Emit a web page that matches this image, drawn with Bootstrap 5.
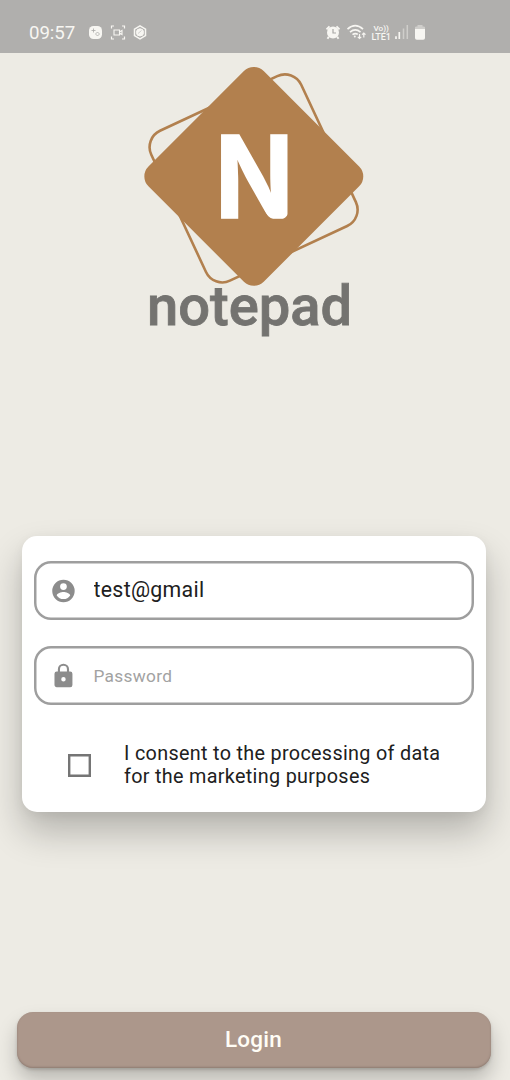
<!DOCTYPE html>
<html lang="en">
<head>
<meta charset="utf-8">
<meta name="viewport" content="width=device-width, initial-scale=1">
<title>Notepad</title>
<link rel="stylesheet" href="https://cdn.jsdelivr.net/npm/bootstrap@5.3.0/dist/css/bootstrap.min.css">
<style>
  body { background: #edebe4; font-family: Roboto, sans-serif; color: #202020; }
  .screen { height: 1080px; }
  .status-bar { height: 53px; background: #b0afad; color: #f7f6f2; padding: 11px 0 0 29px; }
  .clock { font-size: 18.7px; width: 59px; letter-spacing: -.1px; margin-top: 7.500px; line-height: 28px; }
  .status-left { width: 296px; }
  .logo { margin-top: 5px; }
  .login-card { margin: 191.400px 24px 0 22px; height: 275.600px; padding: 24.600px 12px 0; border-radius: 15px;
    box-shadow: 0 20px 36px 0 rgba(0,0,0,.24), 0 3px 12px rgba(0,0,0,.05); }
  .field { height: 59.500px; box-shadow: inset 0 0 0 2.500px #9e9e9e; border-radius: 17px; margin-left: .3px; padding-left: 15.700px; margin-bottom: 25.300px; }
  .field .form-control { background: none; color: #202020; font-size: 21.3px; line-height: 28px; margin-left: 16.600px; letter-spacing: .3px; padding-bottom: 1.500px !important; }
  .field .form-control::placeholder { color: #a2a2a2; font-size: 17.3px; letter-spacing: .3px; opacity: 1; }
  .consent { padding: 11px 0 0 34px; gap: 33px; }
  .consent .form-check-input { width: 23px; height: 23px; border: 2px solid #757575; box-shadow: inset 0 0 0 .4px #757575; border-radius: 0; }
  .consent label { font-size: 19.8px; line-height: 23.5px; letter-spacing: .32px; }
  .btn-login { height: 56px; margin: 0 19px 12px 17px; background: #ac978b; color: #fffdf6; border: 0; border-radius: 16px;
    font-size: 22.5px; font-weight: 500; letter-spacing: .25px; padding: 0 1px 1px 0;
    box-shadow: inset 0 -1px 2px #8f7c72, 0 2px 3px rgba(80,70,65,.25), 0 12px 20px rgba(0,0,0,.22); }
</style>
</head>
<body>
<div class="screen d-flex flex-column overflow-hidden">
  <header class="status-bar d-flex">
    <div class="status-left d-flex align-items-start">
      <span class="clock">09:57</span>
      <svg width="64" height="42" viewBox="88 11 64 42" fill="none" stroke="#f7f6f2">
        <rect x="89" y="26" width="13" height="13" rx="4.500" fill="#f7f6f2" stroke="none"/>
        <path d="M93.500 28.500v4m-2-2h4M97.500 32l2 2-2 2-2-2z" stroke="#aaa9a7" stroke-width=".8"/>
        <path d="M111.500 28.500V26h2.500M122 26h2.500v2.500M124.500 36.500V39H122M114 39h-2.500v-2.500" stroke-width="1.200"/>
        <path d="M114 30h5.500v5H114zM119.500 32l2.500-1.500v4l-2.500-1.500" stroke-width="1.100"/>
        <path d="M140 25.800l5.500 3.300v6.600l-5.500 3.300-5.500-3.300v-6.600z" stroke-width="1.500"/>
        <circle cx="140" cy="32.400" r="3.600" fill="#f7f6f2"/><path d="M138 33.500l3.500-3" stroke="#bbb" stroke-width=".7"/>
      </svg>
    </div>
    <svg width="104" height="42" viewBox="325 11 104 42" fill="none" stroke="#f7f6f2">
      <circle cx="333" cy="32.500" r="6" fill="#f7f6f2" stroke="none"/>
      <path d="M326.500 29.300l3-3M339.500 29.300l-3-3M328.800 36.800l-1.300 2M337.200 36.800l1.300 2" stroke-width="1.900"/>
      <path d="M333 29v4h3" stroke="#a9a8a6" stroke-width="1.200"/>
      <path d="M347.500 29.200q7.700-7 15.500 0M350 32.200q5.300-4.500 10.500 0M352.500 34.700q2.800-2.200 5.300-.3" stroke-width="1.700"/>
      <circle cx="354.800" cy="36.500" r="1" fill="#f7f6f2" stroke="none"/>
      <path d="M359.500 34v4.500m-1.700-1.700l1.700 1.700 1.700-1.700M363.800 37.500V33m-1.700 1.700l1.700-1.700 1.700 1.700" stroke-width="1.200"/>
      <g fill="#f7f6f2" stroke="none" font-family="Roboto, sans-serif" font-weight="500">
        <text x="373.500" y="31" font-size="7.600" textLength="15.500" lengthAdjust="spacingAndGlyphs">Vo))</text>
        <text x="371.500" y="40" font-size="8.600" textLength="19.500" lengthAdjust="spacingAndGlyphs">LTE1</text>
      </g>
      <path d="M396 36.300V39M399.300 32v7" stroke-width="1.700"/>
      <path d="M403.500 28.500V39M407.300 25v14" stroke="#cfcecb" stroke-width="1.500"/>
      <path d="M415 29v-1.500q0-1 1.500-1h1v-1.500h5v1.500h1q1.500 0 1.500 1V29z" fill="#cfcecb" stroke="none"/>
      <path d="M415 29h10v9q0 1.800-1.800 1.800h-6.400q-1.800 0-1.800-1.800z" fill="#f7f6f2" stroke="none"/>
    </svg>
  </header>

  <svg class="logo flex-shrink-0" width="510" height="287" viewBox="0 58 510 287" role="img" aria-label="notepad">
    <rect x="170.900" y="95.700" width="165.400" height="165.400" rx="18" transform="rotate(-25 253.600 178.400)" fill="none" stroke="#b2804e" stroke-width="2.600"/>
    <rect x="172.300" y="94.900" width="163" height="163" rx="14" transform="rotate(45 253.800 176.400)" fill="#b2804e"/>
    <text x="215" y="218" font-family="Inter, sans-serif" font-weight="700" font-size="114" fill="#fff" stroke="#fff" stroke-width="1.600" textLength="78.500" lengthAdjust="spacingAndGlyphs">N</text>
    <path d="M290 205q-.5 14-11.500 15-8 .3-12.500-6.500l-3.500-5v13h27.500z" fill="#b2804e"/>
    <text x="147" y="324.500" font-family="Roboto, sans-serif" font-weight="500" font-size="55" fill="#747370" stroke="#747370" stroke-width=".8" textLength="205" lengthAdjust="spacingAndGlyphs">notepad</text>
  </svg>

  <main class="login-card card border-0 bg-white flex-shrink-0">
    <div class="field d-flex align-items-center">
      <svg width="30" height="30" viewBox="0 0 24 24" fill="#8c8c8c"><path d="M12 2a10 10 0 1 0 0 20 10 10 0 0 0 0-20zm0 3a3 3 0 1 1 0 6 3 3 0 0 1 0-6zm0 14.200a7.200 7.200 0 0 1-6-3.220c.03-1.990 4-3.080 6-3.080s5.970 1.090 6 3.080a7.200 7.200 0 0 1-6 3.220z"/></svg>
      <input class="form-control border-0 shadow-none p-0" type="text" value="test@gmail" aria-label="Email">
    </div>
    <div class="field d-flex align-items-center">
      <svg width="30" height="30" viewBox="0 0 24 24" fill="#8c8c8c"><path d="M18 8h-1V6A5 5 0 0 0 7 6v2H6a2 2 0 0 0-2 2v10c0 1.100.9 2 2 2h12a2 2 0 0 0 2-2V10a2 2 0 0 0-2-2zm-6 9a2 2 0 1 1 0-4 2 2 0 0 1 0 4zm3.100-9H8.900V6a3.100 3.100 0 0 1 6.200 0z"/></svg>
      <input class="form-control border-0 shadow-none p-0" type="password" placeholder="Password" aria-label="Password">
    </div>
    <div class="consent d-flex align-items-center">
      <input class="form-check-input m-0 flex-shrink-0" type="checkbox" id="consent">
      <label for="consent">I consent to the processing of data<br>for the marketing purposes</label>
    </div>
  </main>

  <button class="btn btn-login mt-auto flex-shrink-0" type="button">Login</button>
</div>
<script src="https://cdn.jsdelivr.net/npm/bootstrap@5.3.0/dist/js/bootstrap.bundle.min.js"></script>
</body>
</html>
